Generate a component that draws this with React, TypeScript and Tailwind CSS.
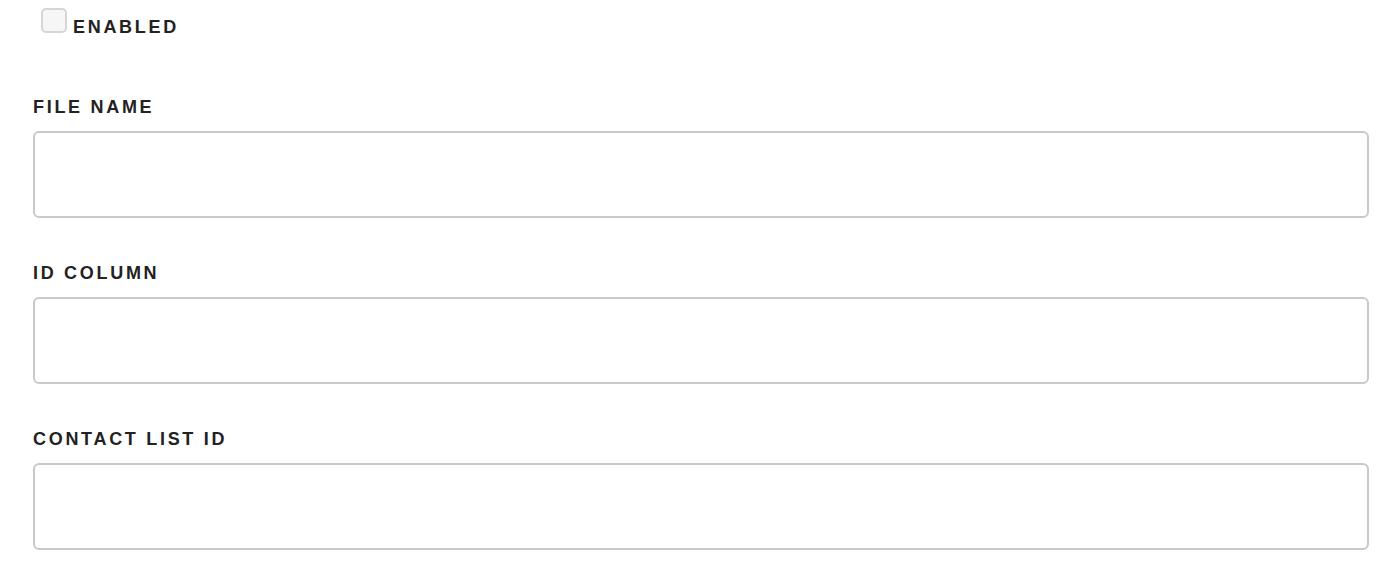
import React from "react";

const labelCls =
  "block text-[18px] font-bold tracking-[2.7px] text-[#222222] leading-[20px] uppercase";

function Field({ label }: { label: string }) {
  return (
    <div className="flex flex-col">
      <label className={labelCls}>{label}</label>
      <input
        type="text"
        className="mt-[14px] h-[87px] w-full rounded-[6px] border-2 border-[#c9c9c9] bg-white outline-none"
      />
    </div>
  );
}

export default function App() {
  return (
    <div
      className="min-h-[572px] bg-white pl-[33px] pr-[18px]"
      style={{ fontFamily: '"Liberation Sans", Arial, sans-serif' }}
    >
      <div className="flex items-start pt-[8px] pl-[8px]">
        <span className="inline-block h-[25px] w-[26px] rounded-[5px] border-2 border-[#d6d6d6] bg-[#f6f6f6]" />
        <span className={labelCls + " ml-[6px] mt-[9px]"}>Enabled</span>
      </div>
      <div className="mt-[60px] flex flex-col gap-[45px]">
        <Field label="File Name" />
        <Field label="ID Column" />
        <Field label="Contact List ID" />
      </div>
    </div>
  );
}
